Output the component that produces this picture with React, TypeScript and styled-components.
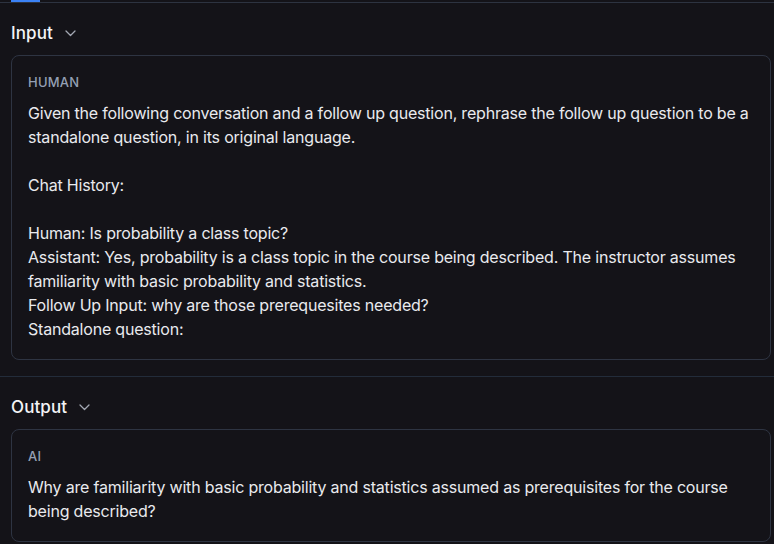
import React from "react";
import styled, { createGlobalStyle } from "styled-components";

const Global = createGlobalStyle`
  html, body { margin: 0; padding: 0; background: #141318; }
  body { font-family: Inter, "Noto Sans", sans-serif; color: #e6e7eb; -webkit-font-smoothing: antialiased; }
`;

const Page = styled.div`
  width: 774px;
  height: 544px;
  overflow: hidden;
  background: #141318;
`;

const TabBar = styled.div`
  height: 2px;
  border-bottom: 1px solid #2d3340;
  padding-left: 11px;
  display: flex;
`;

const ActiveTab = styled.div`
  width: 29px;
  height: 2px;
  background: #3b82f6;
`;

const Section = styled.section<{ $divider?: boolean }>`
  padding: 19px 3px 16px 11px;
  border-top: ${(p) => (p.$divider ? "1px solid #232c3a" : "none")};
  display: flex;
  flex-direction: column;
  gap: 11px;
`;

const Header = styled.div`
  display: flex;
  align-items: center;
  gap: 12px;
  height: 22px;
  font-size: 17px;
  font-weight: 500;
  color: #f3f4f6;
  letter-spacing: 0.1px;
`;

const Card = styled.div`
  border: 1px solid #2e3442;
  border-radius: 8px;
  padding: 16px 16px 18px 16px;
  display: flex;
  flex-direction: column;
  gap: 9px;
`;

const Role = styled.div`
  font-size: 13px;
  line-height: 20px;
  font-weight: 500;
  color: #94a0b4;
  letter-spacing: 0.2px;
`;

const Body = styled.div`
  font-size: 16px;
  line-height: 24px;
  color: #e9eaee;
  letter-spacing: -0.2px;
  white-space: pre-wrap;
`;

const Chevron = () => (
  <svg width="11" height="7" viewBox="0 0 11 7" fill="none">
    <path d="M1 1l4.5 4.5L10 1" stroke="#a3a8b3" strokeWidth="1.3" strokeLinecap="round" strokeLinejoin="round" />
  </svg>
);

const inputText = `Given the following conversation and a follow up question, rephrase the follow up question to be a standalone question, in its original language.

Chat History:

Human: Is probability a class topic?
Assistant: Yes, probability is a class topic in the course being described. The instructor assumes familiarity with basic probability and statistics.
Follow Up Input: why are those prerequesites needed?
Standalone question:`;

const outputText = `Why are familiarity with basic probability and statistics assumed as prerequisites for the course being described?`;

export default function App() {
  return (
    <Page>
      <Global />
      <TabBar>
        <ActiveTab />
      </TabBar>
      <Section>
        <Header>
          Input <Chevron />
        </Header>
        <Card>
          <Role>HUMAN</Role>
          <Body>{inputText}</Body>
        </Card>
      </Section>
      <Section $divider>
        <Header>
          Output <Chevron />
        </Header>
        <Card>
          <Role>AI</Role>
          <Body>{outputText}</Body>
        </Card>
      </Section>
    </Page>
  );
}
